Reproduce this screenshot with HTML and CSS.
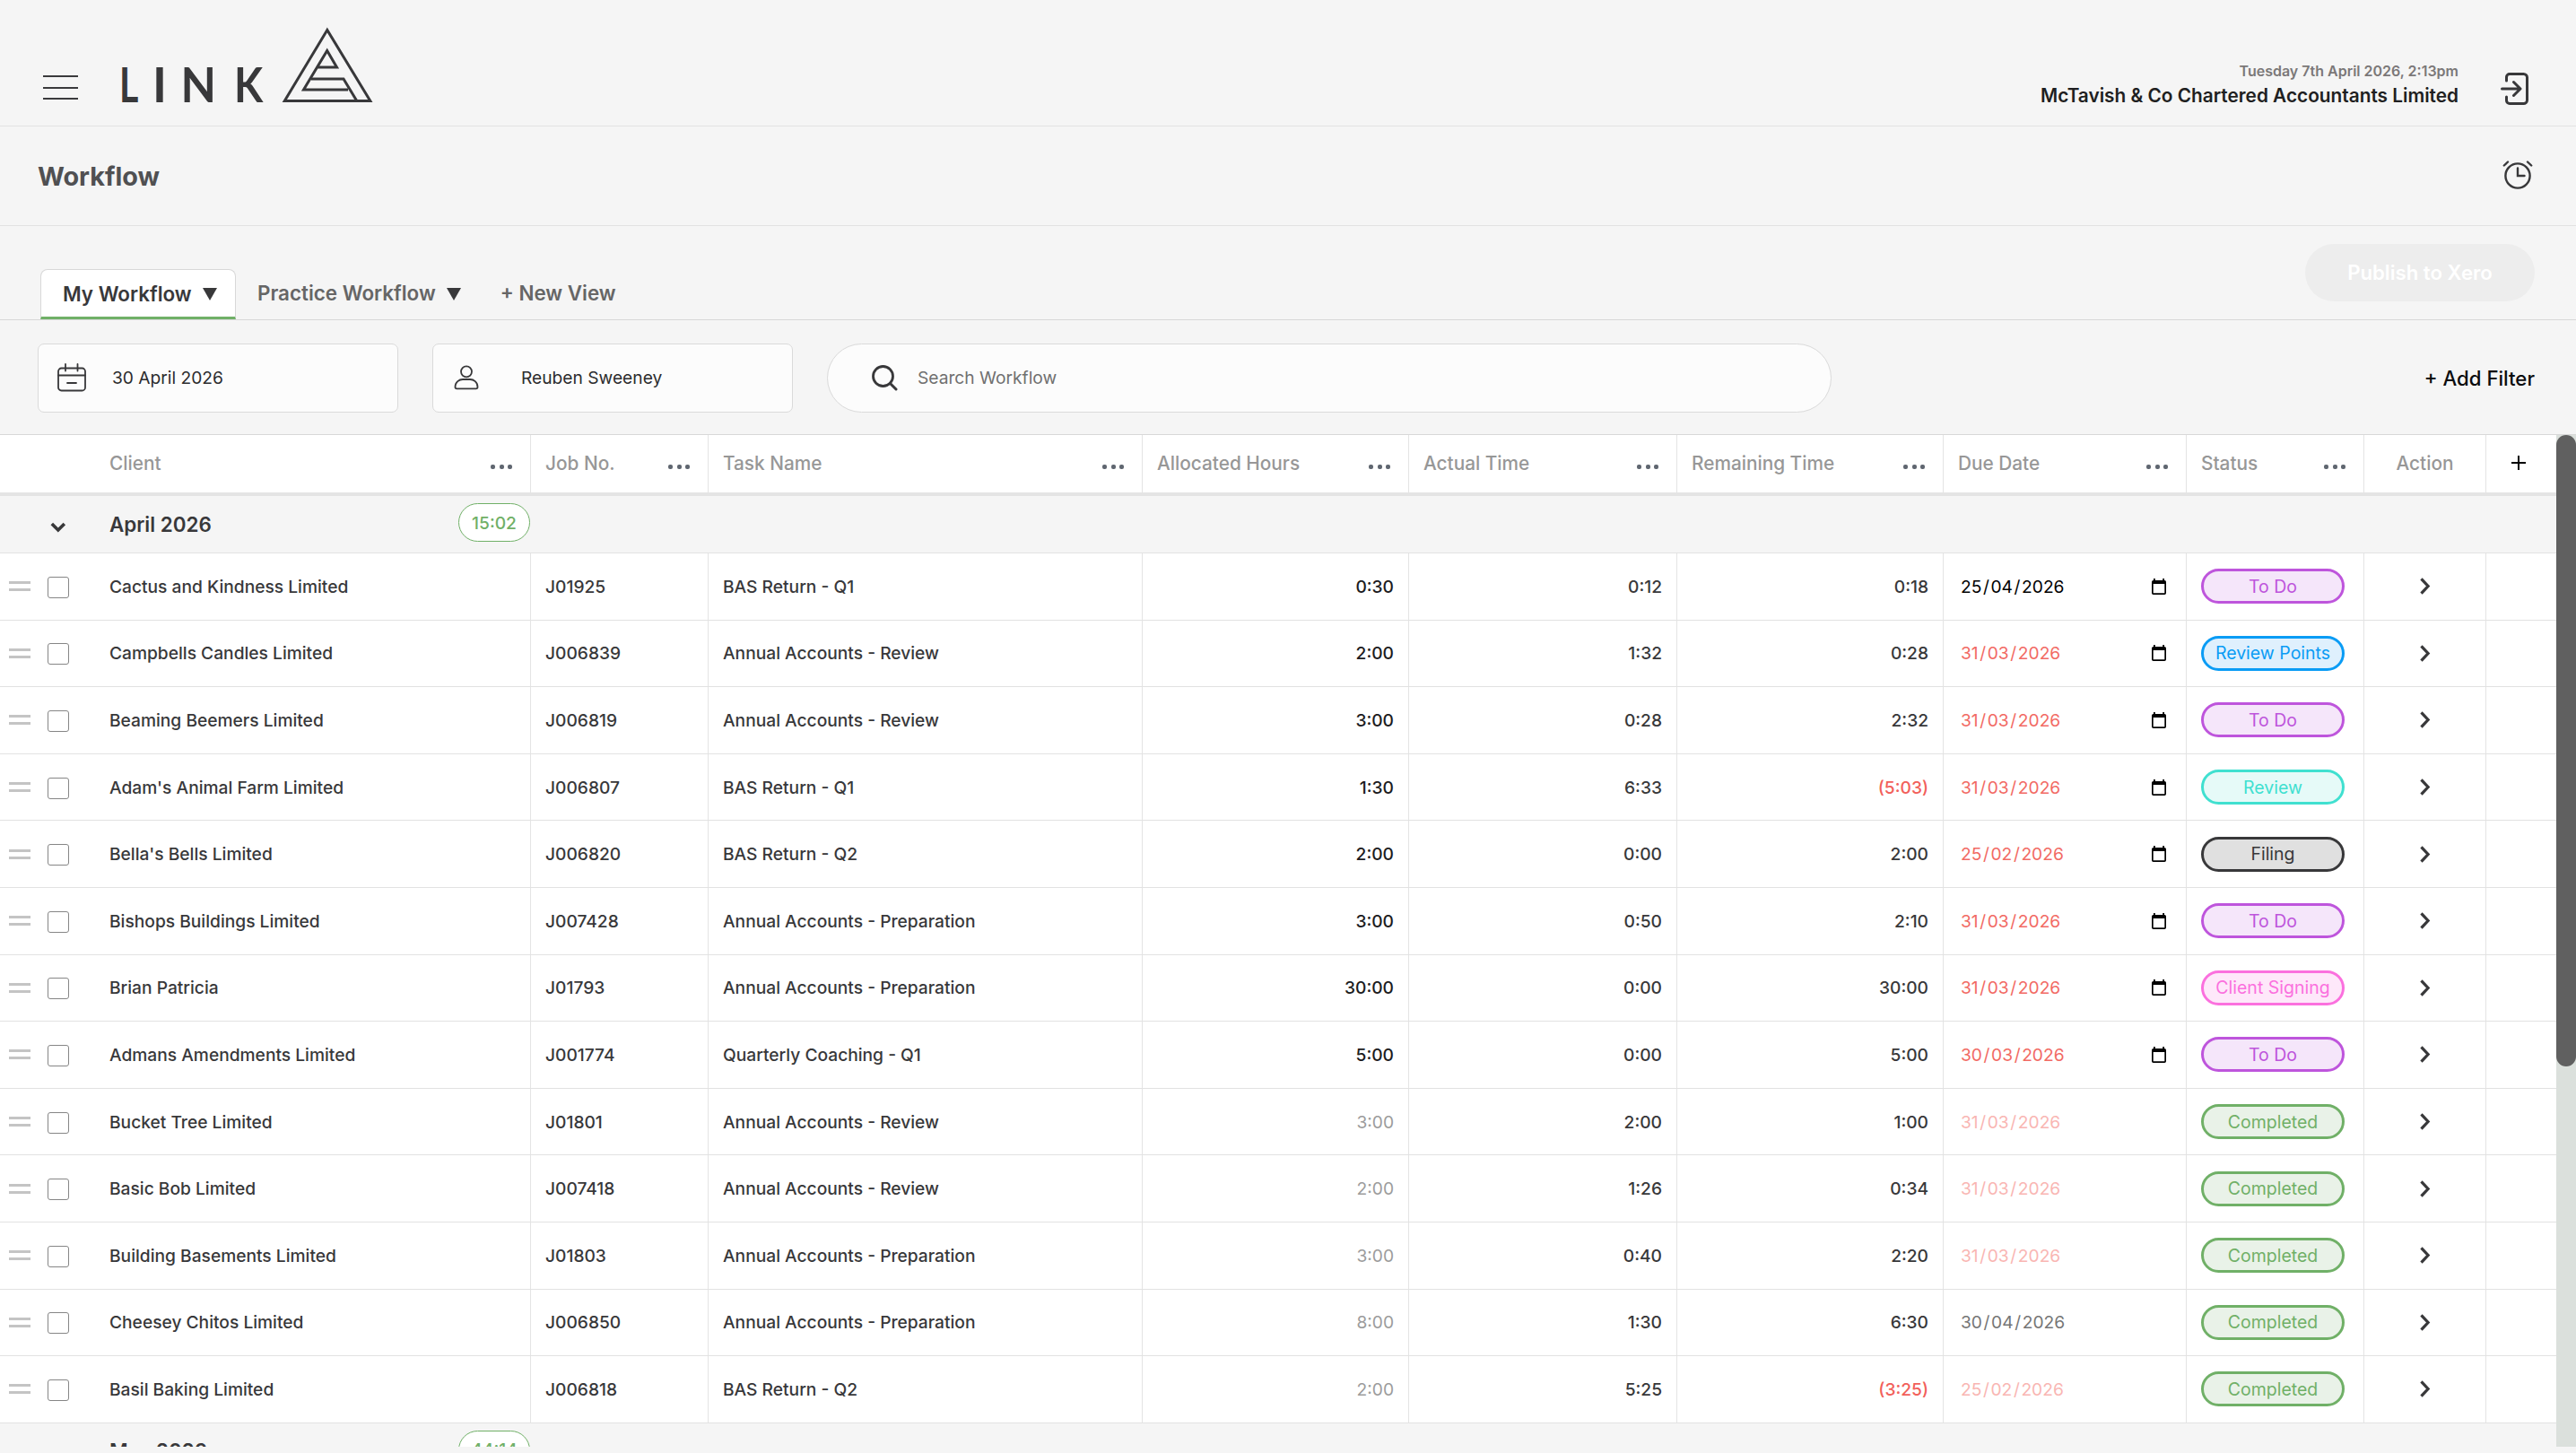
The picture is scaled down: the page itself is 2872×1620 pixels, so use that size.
FILE: index.html
```html
<!DOCTYPE html>
<html lang="en">
<head>
    <meta charset="UTF-8">
    <meta name="viewport" content="width=device-width, initial-scale=1.0">
    <title>Link - Workflow</title>
    <link rel="stylesheet" href="styles.css">
</head>
<body>

    <!-- Shared icons -->
    <svg class="icon-defs" width="0" height="0">
        <symbol id="icon-calendar" viewBox="0 0 16 18">
            <path d="M1.800 2h12.400A1.800 1.800 0 0 1 16 3.800v12.400a1.800 1.800 0 0 1-1.800 1.800H1.800A1.800 1.800 0 0 1 0 16.200V3.800A1.800 1.800 0 0 1 1.800 2zM1.700 6v10.300h12.600V6z" fill="#000" fill-rule="evenodd"/>
            <path d="M2 0h1.800v3H2zM12.200 0H14v3h-1.800z" fill="#000"/>
        </symbol>
        <symbol id="icon-right" viewBox="0 0 12 19">
            <path d="M1.500 1.300l7.600 8.200-7.600 8.200" fill="none" stroke="#38383a" stroke-width="3.200"/>
        </symbol>
        <symbol id="icon-down" viewBox="0 0 18 12">
            <path d="M1.800 2l7 7 7-7" fill="none" stroke="#38383a" stroke-width="3.600"/>
        </symbol>
    </svg>

    <header class="header">
        <svg class="menu-icon" width="39" height="30" viewBox="0 0 39 30">
            <path d="M0 2h39M0 15h39M0 27h39" stroke="#3a3a3c" stroke-width="2"/>
        </svg>
        <svg class="logo" width="290" height="100" viewBox="130 25 290 100">
            <g class="logo-text">
                <text transform="translate(133 113.500) scale(.76 1)">L</text>
                <text transform="translate(170 113.500)">I</text>
                <text transform="translate(201.500 113.500) scale(.95 1)">N</text>
                <text transform="translate(261 113.500) scale(.87 1)">K</text>
            </g>
            <g fill="none" stroke="#38383a" stroke-width="3">
                <path d="M364.800 33.500L317.300 112.500H412.800Z"/>
                <path d="M354.500 75H375.500L364.700 56.500L338.500 100H388"/>
                <path d="M347 88H383L397.500 112"/>
            </g>
        </svg>
        <div class="account">
            <div class="account-date">Tuesday 7th April 2026, 2:13pm</div>
            <div class="account-name">McTavish &amp; Co Chartered Accountants Limited</div>
        </div>
        <svg class="logout-icon" width="32" height="36" viewBox="0 0 32 36">
            <path d="M6.500 9V5a3.500 3.500 0 0 1 3.500-3.500h15.500A4 4 0 0 1 29.500 5.500v25a4 4 0 0 1-4 4H10a3.500 3.500 0 0 1-3.500-3.500v-4M1.500 18h20M14.500 10.500l7.500 7.500-7.500 7.500" fill="none" stroke="#38383a" stroke-width="3" stroke-linecap="round" stroke-linejoin="round"/>
        </svg>
    </header>

    <div class="title-bar">
        <h1 class="title">Workflow</h1>
        <svg class="alarm-icon" width="34" height="32" viewBox="0 0 34 32">
            <g fill="none" stroke="#38383a" stroke-width="2.400" stroke-linecap="round">
                <circle cx="17" cy="17" r="13.600"/>
                <path d="M17 8.500V17h7.500M1.800 5.500L6 1.500M32.200 5.500L28 1.500"/>
            </g>
        </svg>
    </div>

    <nav class="tabs">
        <div class="tab active"><span>My Workflow</span><i class="caret"></i></div>
        <div class="tab practice"><span>Practice Workflow</span><i class="caret"></i></div>
        <div class="tab new-view">+ New View</div>
        <button class="publish" disabled>Publish to Xero</button>
    </nav>

    <div class="filters">
        <div class="filter-box date-box">
            <svg width="32" height="32" viewBox="0 0 32 32">
                <g fill="none" stroke="#38383a" stroke-width="1.800" stroke-linecap="round">
                    <rect x="1" y="5.500" width="30" height="25" rx="3.500"/>
                    <path d="M1 13.500h30M9 1v7.500M22.500 1v7.500M11 22h10"/>
                </g>
            </svg>
            <span>30 April 2026</span>
        </div>
        <div class="filter-box user-box">
            <svg width="28" height="28" viewBox="0 0 28 28">
                <g fill="none" stroke="#38383a" stroke-width="1.800">
                    <circle cx="14" cy="7.300" r="6"/>
                    <path d="M1.500 24.500C1.500 19 6 16 10 16h8c4 0 8.500 3 8.500 8.500 0 1-.8 1.800-1.800 1.800H3.300c-1 0-1.800-.8-1.800-1.800z"/>
                </g>
            </svg>
            <span>Reuben Sweeney</span>
        </div>
        <div class="search-box">
            <svg width="29" height="29" viewBox="0 0 29 29">
                <circle cx="12.500" cy="12.500" r="11" fill="none" stroke="#38383a" stroke-width="2.800"/>
                <path d="M20.500 20.500l6.500 6.500" stroke="#38383a" stroke-width="3" stroke-linecap="round"/>
            </svg>
            <span>Search Workflow</span>
        </div>
        <div class="add-filter">+ Add Filter</div>
    </div>

    <main class="table-wrap">
        <div class="table" id="table"></div>
        <div class="scroll-track"><div class="scroll-thumb"></div></div>
    </main>

    <script src="script.js"></script>
</body>
</html>
```
FILE: styles.css
```css
* {
    margin: 0;
    padding: 0;
    box-sizing: border-box;
}

body {
    font-family: Inter, "Liberation Sans", sans-serif;
    font-size: 19.2px;
    color: #38383a;
    background-color: #f5f5f5;
    height: 1620px;
    padding-bottom: 7px;
    display: flex;
    flex-direction: column;
    overflow: hidden;
}

.icon-defs {
    position: absolute;
}

svg {
    display: block;
    flex: none;
}

/* Header */
.header {
    height: 141px;
    flex: none;
    display: flex;
    align-items: flex-start;
    border-bottom: 1px solid #e2e2e2;
    padding: 0 52px 0 48px;
}

.menu-icon {
    margin-top: 83px;
}

.logo {
    margin: 25px 0 0 43px;
}

.logo-text {
    font-family: Lato, sans-serif;
    font-weight: 700;
    font-size: 54px;
    fill: #38383a;
}

.account {
    margin: 68px 47px 0 auto;
    text-align: right;
}

.account-date {
    font-size: 16px;
    line-height: 22px;
    font-weight: 600;
    color: #7b7878;
}

.account-name {
    font-size: 20.8px;
    line-height: 34px;
    font-weight: 600;
    color: #1f1f21;
}

.logout-icon {
    margin-top: 81px;
}

/* Title */
.title-bar {
    height: 111px;
    flex: none;
    display: flex;
    align-items: center;
    justify-content: space-between;
    border-bottom: 1px solid #e2e2e2;
    padding: 0 48px 0 42px;
}

.title {
    font-size: 28.8px;
    font-weight: 700;
    color: #505052;
}

.alarm-icon {
    margin-bottom: 2px;
}

/* Tabs */
.tabs {
    height: 105px;
    flex: none;
    display: flex;
    align-items: flex-end;
    border-bottom: 1px solid #d8d8d8;
    padding: 0 46px 0 45px;
    font-size: 22.4px;
    font-weight: 600;
}

.tab {
    height: 56px;
    display: flex;
    align-items: center;
    gap: 12px;
    padding-bottom: 3px;
    color: #666;
}

.tab.active {
    width: 218px;
    padding: 0 0 0 24px;
    color: #38383a;
    background-color: #fff;
    border: 1px solid #d8d8d8;
    border-bottom: 3px solid #70b067;
    border-radius: 8px 8px 0 0;
}

.caret {
    margin-top: 2px;
    border-left: 8px solid transparent;
    border-right: 8px solid transparent;
    border-top: 14px solid #38383a;
}

.practice {
    margin-left: 24px;
}

.new-view {
    margin-left: 44px;
}

.publish {
    width: 256px;
    height: 64px;
    margin: 0 0 20px auto;
    padding-bottom: 2px;
    border: none;
    border-radius: 32px;
    background-color: #ededed;
    color: #fff;
    font: inherit;
    font-size: 22.2px;
}

/* Filters */
.filters {
    height: 128px;
    flex: none;
    display: flex;
    align-items: center;
    padding: 2px 46px 0 42px;
    border-bottom: 1px solid #d8d8d8;
}

.filter-box,
.search-box {
    height: 77px;
    display: flex;
    align-items: center;
    padding-bottom: 1px;
    border: 1px solid #dadada;
    background-color: #fcfcfc;
    color: #2c2c2e;
}

.filter-box {
    width: 402px;
    border-radius: 7px;
}

.date-box {
    padding-left: 21px;
    gap: 29px;
}

.user-box {
    margin-left: 38px;
    padding-left: 23px;
    gap: 47px;
}

.search-box {
    width: 1120px;
    margin-left: 38px;
    padding-left: 49px;
    gap: 22px;
    border-radius: 39px;
    color: #707070;
}

.add-filter {
    margin-left: auto;
    font-size: 22.2px;
    font-weight: 500;
    color: #0c0c0e;
}

/* Table */
.table-wrap {
    flex: 1;
    min-height: 0;
    display: flex;
}

.table {
    width: 2850px;
    overflow: hidden;
    font-weight: 500;
}

.row {
    display: grid;
    grid-template-columns: 592px 198px 484px 297px 299px 297px 271px 198px 136px 78px;
    height: 74.6px;
    background-color: #fff;
    border-bottom: 1px solid #e2e2e2;
}

.cell {
    display: flex;
    align-items: center;
    padding: 0 16px;
    border-right: 1px solid #e4e4e4;
    white-space: nowrap;
}

.cell:last-child {
    border-right: none;
}

.head {
    height: 68px;
    border-bottom: 4px solid #e4e4e4;
    font-size: 20.8px;
    color: #979797;
}

.head .cell {
    justify-content: space-between;
    padding-right: 20px;
    padding-bottom: 2px;
}

.head .client {
    padding-left: 122px;
}

.head .action {
    justify-content: center;
    padding-left: 0;
    padding-right: 0;
}

.head .plus {
    padding-left: 28px;
}

.dots {
    display: flex;
    gap: 4.5px;
    padding-top: 9px;
}

.dots i {
    width: 5px;
    height: 5px;
    border-radius: 2px;
    background-color: #5f6670;
}

.group {
    display: flex;
    align-items: center;
    height: 64px;
    padding-left: 56px;
    background-color: #f5f5f5;
    border-bottom: 1px solid #e2e2e2;
}

.group-name {
    width: 389px;
    margin-left: 48px;
    padding-bottom: 1px;
    font-size: 22.4px;
    font-weight: 600;
}

.group svg {
    margin-top: 7px;
}

.badge {
    width: 80px;
    height: 43px;
    margin-bottom: 4px;
    border: 1px solid #70b067;
    border-radius: 22px;
    background-color: #fff;
    color: #70b067;
    display: flex;
    align-items: center;
    justify-content: center;
}

.row .client-cell {
    padding-left: 10px;
}

.handle {
    width: 24px;
    height: 11px;
    border-top: 3px solid #c4c4c4;
    border-bottom: 3px solid #c4c4c4;
}

.checkbox {
    appearance: none;
    width: 24px;
    height: 24px;
    margin: 2px 45px 0 19px;
    border: 1px solid #868686;
    border-radius: 3px;
    background-color: #fff;
}

.cell.num {
    justify-content: flex-end;
}

.allocated {
    color: #1c1c1e;
    font-weight: 450;
}

.late {
    color: #f2605a;
}

.cell.due {
    justify-content: space-between;
    padding: 0 22px 0 19px;
    color: #000;
    font-weight: 400;
}

.due b {
    font-weight: inherit;
    margin: 0 1.6px;
}

.cell.due.late {
    color: #f26a64;
}

.done .allocated {
    color: #9c9c9c;
    font-weight: 400;
}

.done .cell.due {
    color: #767676;
}

.done .cell.due.late {
    color: #f9b6b3;
}

.status {
    width: 160px;
    height: 39px;
    border: 3px solid;
    border-radius: 20px;
    font-size: 19.5px;
    font-weight: 400;
    display: flex;
    align-items: center;
    justify-content: center;
}

.to-do { color: #be55dc; background-color: #f5e6fa; }
.review-points { color: #0a9cf5; background-color: #dff0fd; }
.review { color: #40e0d0; background-color: #e6faf8; }
.filing { color: #38383a; background-color: #e0e0e0; }
.client-signing { color: #fb70de; background-color: #fee8fa; }
.completed { color: #70b067; background-color: #e9f2e8; }

.go {
    justify-content: center;
}

/* Scrollbar */
.scroll-track {
    width: 22px;
    background-color: #dbe0dc;
}

.scroll-thumb {
    height: 704px;
    border-radius: 11px;
    background-color: #606060;
}
```
FILE: script.js
```js
const columns = ['Client', 'Job No.', 'Task Name', 'Allocated Hours', 'Actual Time', 'Remaining Time', 'Due Date', 'Status'];

const jobs = [
    ['Cactus and Kindness Limited', 'J01925', 'BAS Return - Q1', '0:30', '0:12', '0:18', '25/04/2026', 'To Do'],
    ['Campbells Candles Limited', 'J006839', 'Annual Accounts - Review', '2:00', '1:32', '0:28', '31/03/2026', 'Review Points'],
    ['Beaming Beemers Limited', 'J006819', 'Annual Accounts - Review', '3:00', '0:28', '2:32', '31/03/2026', 'To Do'],
    ["Adam's Animal Farm Limited", 'J006807', 'BAS Return - Q1', '1:30', '6:33', '(5:03)', '31/03/2026', 'Review'],
    ["Bella's Bells Limited", 'J006820', 'BAS Return - Q2', '2:00', '0:00', '2:00', '25/02/2026', 'Filing'],
    ['Bishops Buildings Limited', 'J007428', 'Annual Accounts - Preparation', '3:00', '0:50', '2:10', '31/03/2026', 'To Do'],
    ['Brian Patricia', 'J01793', 'Annual Accounts - Preparation', '30:00', '0:00', '30:00', '31/03/2026', 'Client Signing'],
    ['Admans Amendments Limited', 'J001774', 'Quarterly Coaching - Q1', '5:00', '0:00', '5:00', '30/03/2026', 'To Do'],
    ['Bucket Tree Limited', 'J01801', 'Annual Accounts - Review', '3:00', '2:00', '1:00', '31/03/2026', 'Completed'],
    ['Basic Bob Limited', 'J007418', 'Annual Accounts - Review', '2:00', '1:26', '0:34', '31/03/2026', 'Completed'],
    ['Building Basements Limited', 'J01803', 'Annual Accounts - Preparation', '3:00', '0:40', '2:20', '31/03/2026', 'Completed'],
    ['Cheesey Chitos Limited', 'J006850', 'Annual Accounts - Preparation', '8:00', '1:30', '6:30', '30/04/2026', 'Completed'],
    ['Basil Baking Limited', 'J006818', 'BAS Return - Q2', '2:00', '5:25', '(3:25)', '25/02/2026', 'Completed']
];

function headRow() {
    const cells = columns.map((name, i) =>
        `<div class="cell ${i === 0 ? 'client' : ''}">${name}<span class="dots"><i></i><i></i><i></i></span></div>`).join('');
    return `<div class="row head">${cells}
        <div class="cell action">Action</div>
        <div class="cell plus"><svg width="16" height="16" viewBox="0 0 16 16"><path d="M8 0v16M0 8h16" stroke="#000" stroke-width="2"/></svg></div>
    </div>`;
}

function groupRow(name, total) {
    return `<div class="group">
        <svg width="18" height="12"><use href="#icon-down"/></svg>
        <span class="group-name">${name}</span>
        <span class="badge">${total}</span>
    </div>`;
}

function jobRow([client, job, task, allocated, actual, remaining, due, status]) {
    const done = status === 'Completed';
    // overdue when the date falls before April
    const late = Number(due.split('/')[1]) < 4;
    const icon = done ? '' : '<svg width="16" height="18"><use href="#icon-calendar"/></svg>';
    return `<div class="row ${done ? 'done' : ''}">
        <div class="cell client-cell"><span class="handle"></span><input type="checkbox" class="checkbox">${client}</div>
        <div class="cell">${job}</div>
        <div class="cell">${task}</div>
        <div class="cell num allocated">${allocated}</div>
        <div class="cell num">${actual}</div>
        <div class="cell num ${remaining[0] === '(' ? 'late' : ''}">${remaining}</div>
        <div class="cell due ${late ? 'late' : ''}"><span>${due.replace(/\//g, '<b>/</b>')}</span>${icon}</div>
        <div class="cell"><span class="status ${status.toLowerCase().replace(' ', '-')}">${status}</span></div>
        <div class="cell go"><svg width="12" height="19"><use href="#icon-right"/></svg></div>
        <div class="cell"></div>
    </div>`;
}

document.getElementById('table').innerHTML =
    headRow() + groupRow('April 2026', '15:02') + jobs.map(jobRow).join('') + groupRow('May 2026', '44:14');
```
